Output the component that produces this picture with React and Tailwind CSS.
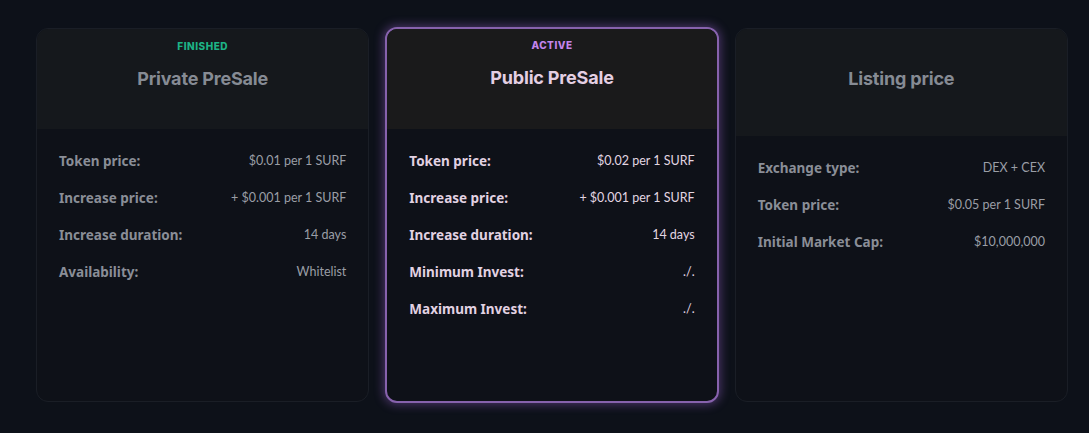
const cards = [
  {
    status: "FINISHED",
    statusClass: "text-[#1db386]",
    title: "Private PreSale",
    headerH: "h-[100px]",
    rows: [
      ["Token price:", "$0.01 per 1 SURF"],
      ["Increase price:", "+ $0.001 per 1 SURF"],
      ["Increase duration:", "14 days"],
      ["Availability:", "Whitelist"],
    ],
  },
  {
    status: "ACTIVE",
    statusClass: "text-[#c384ec]",
    title: "Public PreSale",
    headerH: "h-[100px]",
    active: true,
    rows: [
      ["Token price:", "$0.02 per 1 SURF"],
      ["Increase price:", "+ $0.001 per 1 SURF"],
      ["Increase duration:", "14 days"],
      ["Minimum Invest:", "./."],
      ["Maximum Invest:", "./."],
    ],
  },
  {
    title: "Listing price",
    headerH: "h-[107px]",
    rows: [
      ["Exchange type:", "DEX + CEX"],
      ["Token price:", "$0.05 per 1 SURF"],
      ["Initial Market Cap:", "$10,000,000"],
    ],
  },
];

const Card = ({ card }) => {
  const active = card.active;
  return (
    <div
      className={
        active
          ? "h-[376px] rounded-[12px] border-2 border-[#8762ad] bg-[#0e1118] overflow-hidden shadow-[0_0_10px_2px_rgba(140,90,190,0.45)]"
          : "h-[374px] rounded-[12px] border border-[#1a1e26] bg-[#0e1118] overflow-hidden"
      }
    >
      {/* Header */}
      <div
        className={`${card.headerH} flex flex-col items-center ${active ? "bg-[#1a1a1b] pt-[9px]" : "bg-[#15181c] pt-[10px]"}`}
        style={{ fontFamily: "Inter, 'Noto Sans', sans-serif" }}
      >
        <div className={`h-[16px] text-[10px] font-extrabold tracking-[0.05em] ${card.statusClass || ""}`}>
          {card.status}
        </div>
        <h3
          className={`mt-[12px] text-[18px] font-bold leading-[24px] tracking-[-0.01em] ${active ? "text-[#e4cfe3]" : "text-[#868b94]"}`}
        >
          {card.title}
        </h3>
      </div>

      {/* Rows */}
      <div className="px-[22px] pt-[23px] flex flex-col gap-[18px]">
        {card.rows.map(([label, value]) => (
          <div key={label} className="flex items-center justify-between h-[19px]">
            <span
              className={`text-[13.5px] font-bold ${active ? "text-[#e2d2e2]" : "text-[#8a8e97]"}`}
              style={{ fontFamily: "'Noto Sans', 'Open Sans', sans-serif" }}
            >
              {label}
            </span>
            <span className={`text-[12.5px] ${active ? "text-[#e2d6e2]" : "text-[#9a9ea6]"}`}>
              {value}
            </span>
          </div>
        ))}
      </div>
    </div>
  );
};

export default function App() {
  return (
    <div
      className="min-h-[433px] w-full bg-[#0d1119] pl-[36px] pr-[21px] pt-[28px]"
      style={{ fontFamily: "Lato, 'Noto Sans', sans-serif" }}
    >
      <div className="grid grid-cols-3 gap-[16px] items-start">
        {cards.map((c) => (
          <div key={c.title} className={c.active ? "-mt-[1px]" : ""}>
            <Card card={c} />
          </div>
        ))}
      </div>
    </div>
  );
}
